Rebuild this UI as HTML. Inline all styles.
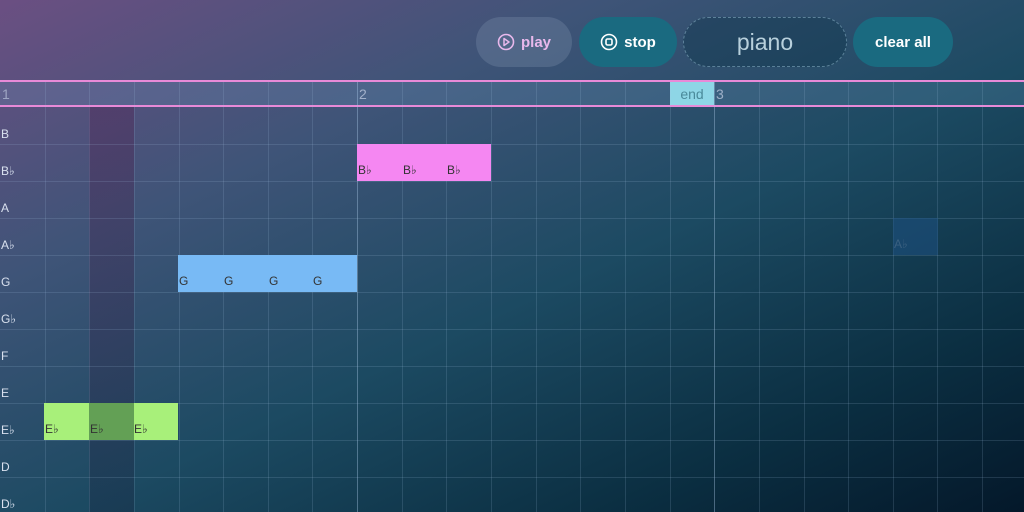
<!DOCTYPE html><html><head><meta charset="utf-8"><style>
*{margin:0;padding:0;box-sizing:border-box}
body{width:1024px;height:512px;overflow:hidden;position:relative;font-family:"Liberation Sans","DejaVu Sans",sans-serif;
background:linear-gradient(155deg,#6b4f82 0%,#3f5478 28%,#1c4a62 55%,#0b2f42 80%,#04182a 100%)}
.a{position:absolute}
.btn{position:absolute;top:17px;height:50px;border-radius:25px;color:#fff;font-weight:bold;font-size:15px;display:flex;align-items:center;justify-content:center;gap:6px}
.v{position:absolute;top:82px;bottom:0;width:1px;background:rgba(170,200,230,.16)}
.h{position:absolute;left:0;right:0;height:1px;background:rgba(170,200,230,.16)}
.lab{position:absolute;left:1px;font-size:12px;color:#d8e0ee}
.n{position:absolute;height:37px;font-size:12px;color:#333;padding-top:19px;padding-left:1px}
</style></head><body>
<div class="a" style="left:89px;top:107px;width:45px;height:405px;background:linear-gradient(180deg,rgba(80,20,70,.3),rgba(20,10,40,.2))"></div>
<div class="btn" style="left:476px;width:96px;background:rgba(120,140,170,.35);color:#e8b8ec"><svg width="18" height="18" viewBox="0 0 18 18"><circle cx="9" cy="9" r="7.5" fill="none" stroke="#e8b8ec" stroke-width="1.6"/><path d="M7 5.5L12 9L7 12.5Z" fill="none" stroke="#e8b8ec" stroke-width="1.5" stroke-linejoin="round"/></svg>play</div>
<div class="btn" style="left:579px;width:98px;background:#1a6a80"><svg width="18" height="18" viewBox="0 0 18 18"><circle cx="9" cy="9" r="7.5" fill="none" stroke="#fff" stroke-width="1.6"/><rect x="6" y="6" width="6" height="6" rx="1.5" fill="none" stroke="#fff" stroke-width="1.6"/></svg>stop</div>
<div class="btn" style="left:683px;width:164px;border:1px dashed rgba(150,190,210,.5);background:rgba(10,50,70,.35);color:#b8d0dc;font-weight:normal;font-size:23px">piano</div>
<div class="btn" style="left:853px;width:100px;background:#1a6a80">clear all</div>
<div class="a" style="left:0;top:82px;width:1024px;height:24px;background:rgba(120,170,210,.2)"></div>
<div class="a" style="left:670px;top:82px;width:44px;height:24px;background:#8ed6e6;color:#4a8a9a;font-size:14px;text-align:center;line-height:24px">end</div>
<div class="a" style="left:0;top:80px;width:1024px;height:2px;background:#e88ad8"></div>
<div class="a" style="left:0;top:105px;width:1024px;height:2px;background:#e88ad8"></div>
<div class="a" style="left:2px;top:86px;font-size:14px;color:rgba(200,210,230,.6)">1</div>
<div class="a" style="left:359px;top:86px;font-size:14px;color:rgba(200,210,230,.7)">2</div>
<div class="a" style="left:716px;top:86px;font-size:14px;color:rgba(200,210,230,.7)">3</div>
<div id="g"></div>
<div class="n" style="left:357px;top:144px;width:134px;background:#f587f2">B♭<span style="position:absolute;left:46px">B♭</span><span style="position:absolute;left:90px">B♭</span></div>
<div class="n" style="left:178px;top:255px;width:179px;background:#78baf5">G<span style="position:absolute;left:46px">G</span><span style="position:absolute;left:91px">G</span><span style="position:absolute;left:135px">G</span></div>
<div class="n" style="left:44px;top:403px;width:134px;background:#a8f07a">E♭<span style="position:absolute;left:45px;top:0;width:45px;height:37px;background:#63a055;padding-top:19px;padding-left:1px">E♭</span><span style="position:absolute;left:90px">E♭</span></div>
<div class="n" style="left:893px;top:218px;width:45px;background:rgba(30,80,130,.55);color:#3a6080">A♭</div>
<script>
var g=document.getElementById('g'),h='';
for(var i=1;i<23;i++){var x=Math.round(i*44.64);h+='<div class="v" style="left:'+x+'px;'+((i==8||i==16)?'background:rgba(170,200,230,.4)':'')+'"></div>';}
var L=['B','B♭','A','A♭','G','G♭','F','E','E♭','D','D♭'];
for(var r=0;r<11;r++){var y=107+r*37;if(r<10)h+='<div class="h" style="top:'+(y+37)+'px"></div>';h+='<div class="lab" style="top:'+(y+20)+'px">'+L[r]+'</div>';}
g.innerHTML=h;
</script>
</body></html>
